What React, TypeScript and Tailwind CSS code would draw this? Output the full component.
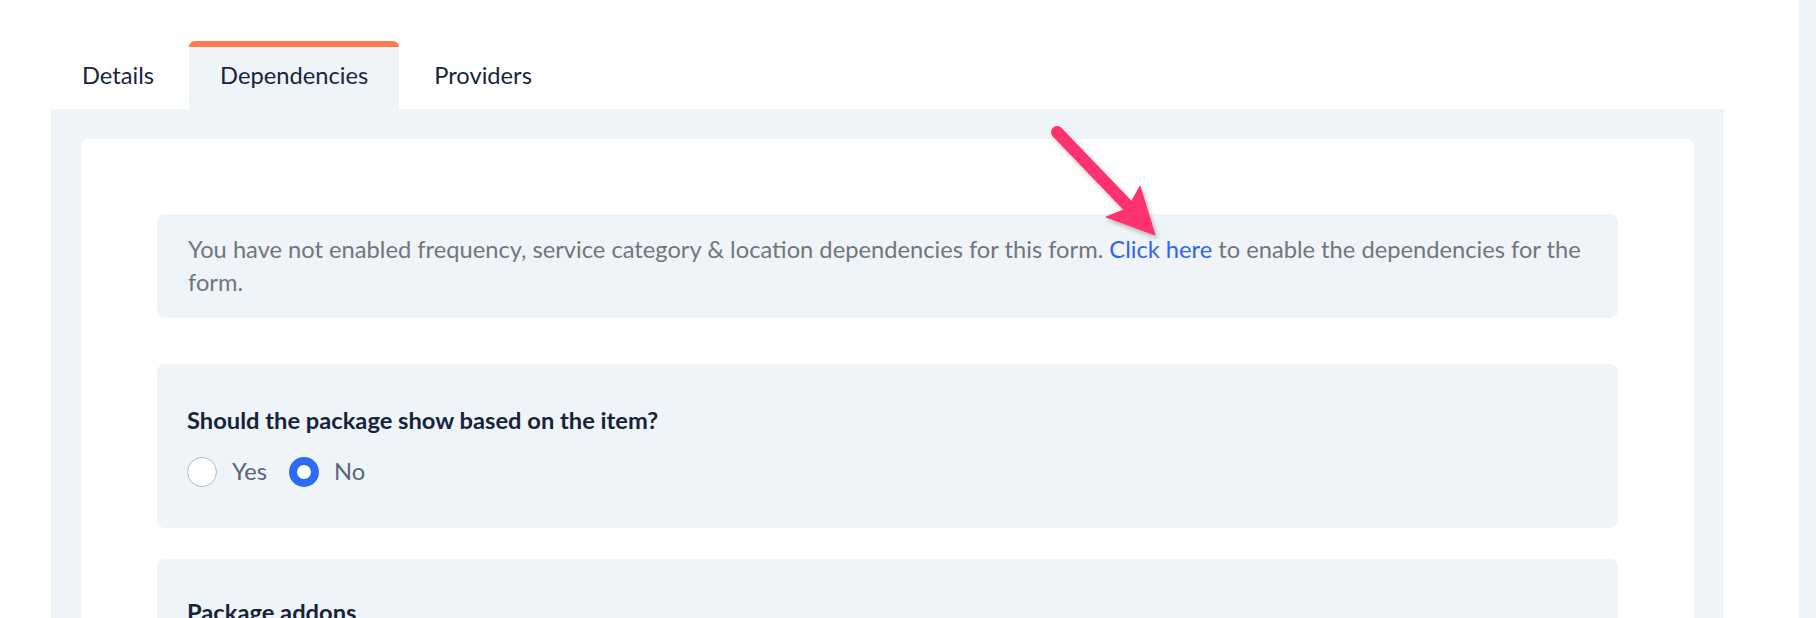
import React from "react";

function Arrow() {
  return (
    <svg
      className="absolute left-[1040px] top-[120px]"
      width="140"
      height="130"
      viewBox="0 0 140 130"
    >
      <defs>
        <filter id="sh" x="-20%" y="-20%" width="140%" height="140%">
          <feDropShadow dx="2" dy="3" stdDeviation="2" floodColor="#000" floodOpacity="0.25" />
        </filter>
      </defs>
      <g filter="url(#sh)" fill="#ff336f" stroke="#ff336f">
        <line x1="17" y1="12" x2="90" y2="88" strokeWidth="12" strokeLinecap="round" />
        <polygon points="115,115 66,97 88,88 100,66" strokeWidth="1" strokeLinejoin="round" />
      </g>
    </svg>
  );
}

function Radio({ checked, label }: { checked?: boolean; label: string }) {
  return (
    <label className="flex items-center gap-[15px]">
      {checked ? (
        <span className="box-border h-[30px] w-[30px] rounded-full border-[8px] border-[#2f6bf0] bg-white" />
      ) : (
        <span className="box-border h-[30px] w-[30px] rounded-full border border-[#b3bac4] bg-white" />
      )}
      <span className="text-[23.7px] leading-[33px] text-[#5a6573]">{label}</span>
    </label>
  );
}

export default function App() {
  return (
    <div
      className="relative flex h-[618px] w-full overflow-hidden bg-white"
      style={{ fontFamily: "Lato, 'Noto Sans', sans-serif" }}
    >
      <div className="flex flex-1 flex-col pl-[51px] pt-[41px]">
        <div className="flex gap-[4px]">
          <div className="px-[31px] pt-[18px] pb-[17px] text-[23.7px] leading-[33px] text-[#17263d]">
            Details
          </div>
          <div className="rounded-t-[6px] border-t-[6px] border-[#ff7a4d] bg-[#eff4f8] px-[31px] pt-[12px] pb-[17px] text-[23.7px] leading-[33px] text-[#17263d]">
            Dependencies
          </div>
          <div className="px-[31px] pt-[18px] pb-[17px] text-[23.7px] leading-[33px] text-[#17263d]">
            Providers
          </div>
        </div>
        <div className="w-[1673px] flex-1 bg-[#eff4f8] px-[30px] pt-[30px]">
          <div className="h-full rounded-t-[8px] bg-white px-[76px] pt-[75px]">
            <div className="rounded-[8px] bg-[#eff4f8] px-[31px] py-[19px] text-[23.7px] leading-[33px] text-[#72767b]">
              You have not enabled frequency, service category &amp; location dependencies for this form.{" "}
              <span className="text-[#2f64f0]">Click here</span> to enable the dependencies for the form.
            </div>
            <div className="mt-[46px] rounded-[8px] bg-[#eff4f8] px-[30px] py-[40px]">
              <div className="text-[23.7px] font-bold leading-[33px] text-[#16243b]">
                Should the package show based on the item?
              </div>
              <div className="mt-[18px] flex items-center gap-[22px]">
                <Radio label="Yes" />
                <Radio checked label="No" />
              </div>
            </div>
            <div className="mt-[31px] rounded-t-[8px] bg-[#eff4f8] px-[30px] pt-[37px] pb-[40px]">
              <div className="text-[23.7px] font-bold leading-[33px] text-[#16243b]">Package addons</div>
            </div>
          </div>
        </div>
      </div>
      <div className="w-[17px] shrink-0 bg-[#eff4f8]" />
      <Arrow />
    </div>
  );
}
